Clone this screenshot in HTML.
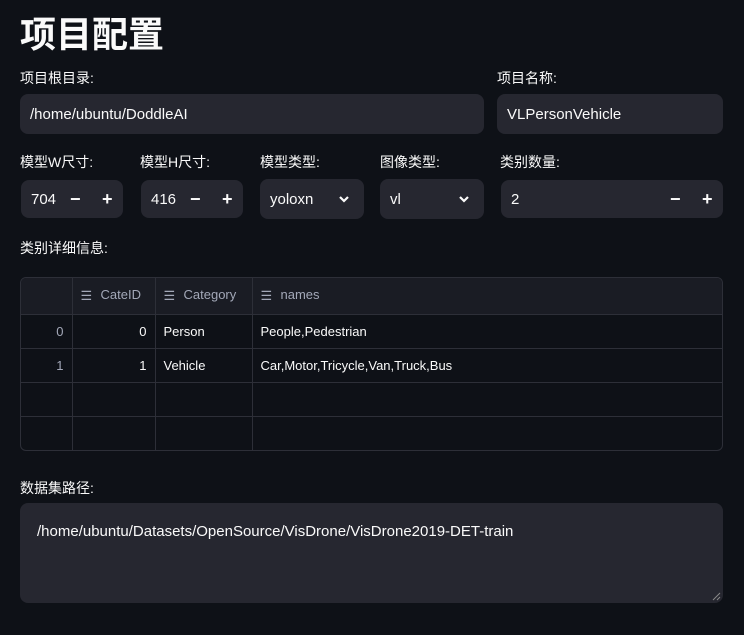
<!DOCTYPE html><html><head><meta charset="utf-8"><style>
body{margin:0;width:744px;height:635px;background:#0e1117;color:#fafafa;font-family:"Liberation Sans","Noto Sans CJK SC",sans-serif;position:relative;overflow:hidden}
.a{position:absolute}
.lbl{font-size:14px;color:#fafafa}
.in{background:#262730;border-radius:8px;font-size:15px;box-sizing:border-box;display:flex;align-items:center;padding-left:10px}
.pm{position:absolute;top:0;height:100%;display:flex;align-items:center;font-size:18px;font-weight:bold}
table{border-collapse:collapse;font-size:13px}
td{border-right:1px solid #2d2f38;border-bottom:1px solid #2d2f38;height:34px;padding:0 8px;box-sizing:border-box}
.hd td{background:#1a1c24;color:#a3a8b8;height:36px}
.ic{display:inline-block;width:14px;vertical-align:middle;margin-right:6px}
</style></head><body>
<div class="a" style="left:20px;top:6px;font-size:36px;font-weight:bold">项目配置</div>
<div class="a lbl" style="left:20px;top:68px">项目根目录:</div>
<div class="a in" style="left:20px;top:94px;width:464px;height:40px">/home/ubuntu/DoddleAI</div>
<div class="a lbl" style="left:497px;top:68px">项目名称:</div>
<div class="a in" style="left:497px;top:94px;width:226px;height:40px">VLPersonVehicle</div>

<div class="a lbl" style="left:20px;top:152px">模型W尺寸:</div>
<div class="a lbl" style="left:140px;top:152px">模型H尺寸:</div>
<div class="a lbl" style="left:260px;top:152px">模型类型:</div>
<div class="a lbl" style="left:380px;top:152px">图像类型:</div>
<div class="a lbl" style="left:500px;top:152px">类别数量:</div>

<div class="a in" style="left:21px;top:180px;width:102px;height:38px">704<span class="pm" style="left:49px">−</span><span class="pm" style="left:81px">+</span></div>
<div class="a in" style="left:141px;top:180px;width:102px;height:38px">416<span class="pm" style="left:49px">−</span><span class="pm" style="left:81px">+</span></div>
<div class="a in" style="left:260px;top:179px;width:104px;height:40px">yoloxn<svg class="a" style="left:78px;top:16px" width="12" height="8" viewBox="0 0 12 8"><path d="M2 2l4 4 4-4" stroke="#fafafa" stroke-width="2.2" fill="none"/></svg></div>
<div class="a in" style="left:380px;top:179px;width:104px;height:40px">vl<svg class="a" style="left:78px;top:16px" width="12" height="8" viewBox="0 0 12 8"><path d="M2 2l4 4 4-4" stroke="#fafafa" stroke-width="2.2" fill="none"/></svg></div>
<div class="a in" style="left:501px;top:180px;width:222px;height:38px">2<span class="pm" style="left:169px">−</span><span class="pm" style="left:201px">+</span></div>

<div class="a lbl" style="left:20px;top:238px">类别详细信息:</div>
<div class="a" style="left:20px;top:277px;width:703px;height:174px;border:1px solid #2d2f38;border-radius:6px;overflow:hidden;box-sizing:border-box">
<table style="width:703px;table-layout:fixed">
<colgroup><col style="width:51px"><col style="width:83px"><col style="width:97px"><col></colgroup>
<tr class="hd"><td></td><td><span class="ic">☰</span>CateID</td><td><span class="ic">☰</span>Category</td><td style="border-right:0"><span class="ic">☰</span>names</td></tr>
<tr><td style="text-align:right;color:#a3a8b8">0</td><td style="text-align:right">0</td><td>Person</td><td style="border-right:0">People,Pedestrian</td></tr>
<tr><td style="text-align:right;color:#a3a8b8">1</td><td style="text-align:right">1</td><td>Vehicle</td><td style="border-right:0">Car,Motor,Tricycle,Van,Truck,Bus</td></tr>
<tr><td></td><td></td><td></td><td style="border-right:0"></td></tr>
<tr><td style="border-bottom:0"></td><td style="border-bottom:0"></td><td style="border-bottom:0"></td><td style="border:0"></td></tr>
</table></div>

<div class="a lbl" style="left:20px;top:478px">数据集路径:</div>
<div class="a" style="left:20px;top:503px;width:703px;height:100px;background:#262730;border-radius:8px;box-sizing:border-box;padding:20px 17px;font-size:15px">/home/ubuntu/Datasets/OpenSource/VisDrone/VisDrone2019-DET-train
<svg class="a" style="right:2px;bottom:2px" width="9" height="9" viewBox="0 0 9 9"><path d="M8 1L1 8M8 5L5 8" stroke="#888" stroke-width="1"/></svg></div>
</body></html>
